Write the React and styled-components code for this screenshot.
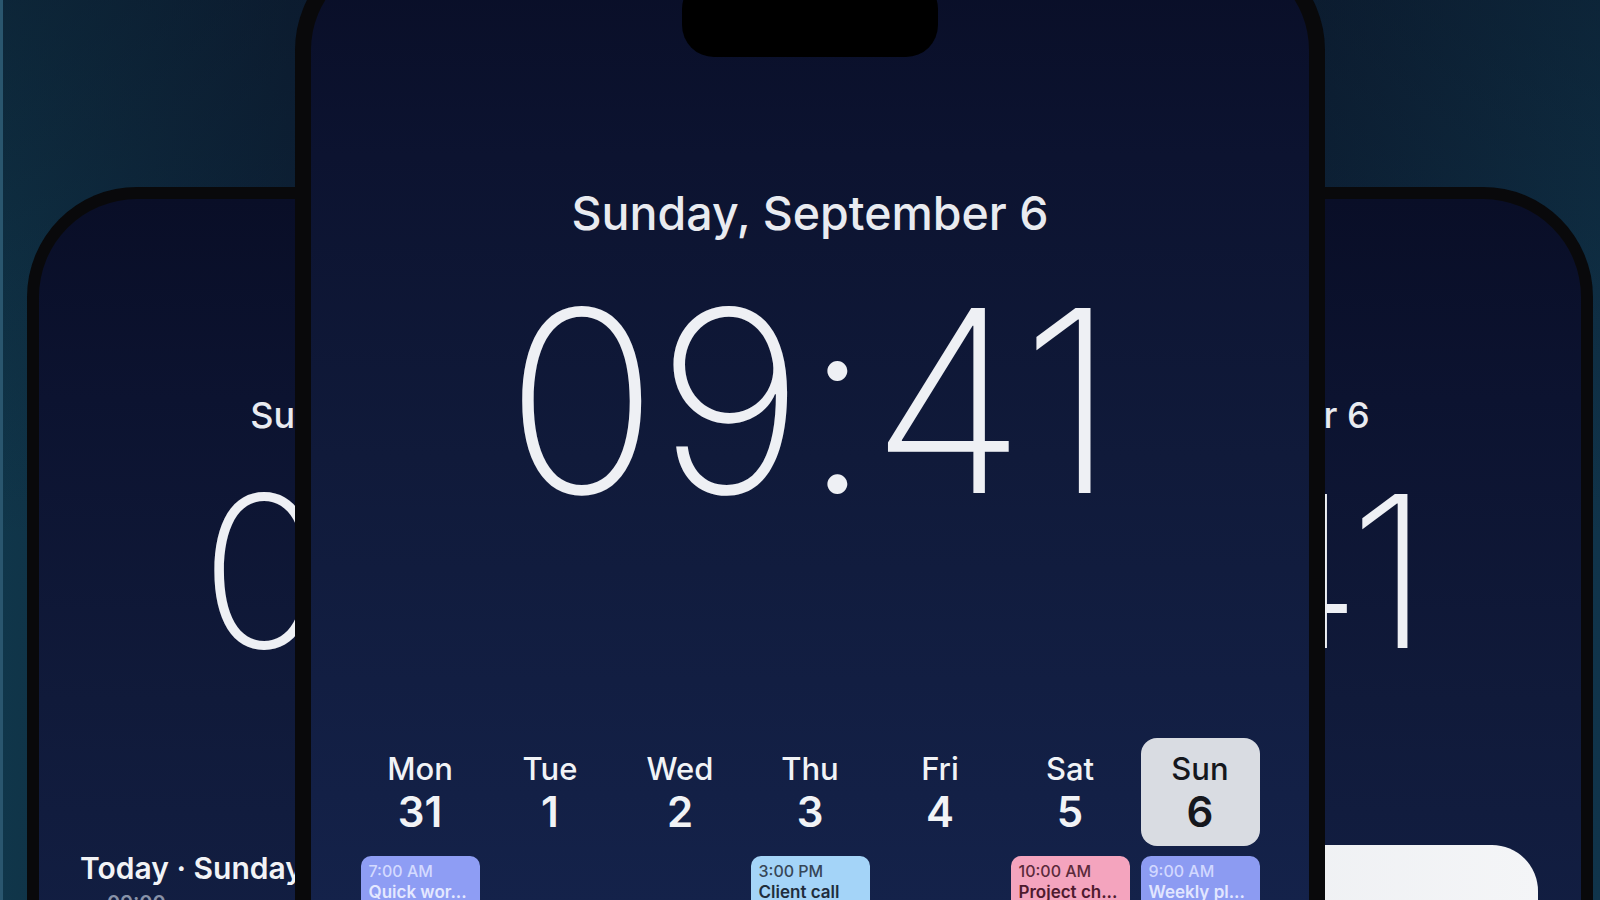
import React from 'react';
import styled, { createGlobalStyle } from 'styled-components';

const GlobalStyle = createGlobalStyle`
  html, body {
    margin: 0;
    padding: 0;
    background: #0c1a2e;
    overflow: hidden;
  }

  * {
    box-sizing: border-box;
  }
`;

const Stage = styled.div`
  position: relative;
  width: 1600px;
  height: 900px;
  overflow: hidden;
  font-family: 'Inter', 'Noto Sans', sans-serif;
  background:
    linear-gradient(180deg, rgba(8, 14, 30, 0.4) 0%, rgba(8, 14, 30, 0) 60%),
    linear-gradient(90deg, #10364a 0%, #0e253b 18%, #0c1c31 50%, #0e253b 82%, #10344a 100%);
  box-shadow: inset 3px 0 0 #2a566e;
`;

const Phone = styled.div`
  position: absolute;
  left: ${(p) => p.$left}px;
  top: ${(p) => p.$top}px;
  width: ${(p) => p.$width}px;
  height: ${(p) => p.$height}px;
  padding: ${(p) => p.$frame}px;
  border-radius: ${(p) => p.$radius}px;
  background: #09090b;
  z-index: ${(p) => p.$z};
`;

const Screen = styled.div`
  height: 100%;
  border-radius: ${(p) => p.$radius}px;
  overflow: hidden;
  display: flex;
  flex-direction: column;
  align-items: center;
  padding-top: ${(p) => p.$padTop}px;
  background: linear-gradient(180deg, #090e27 0px, #0c1330 200px, #101a3a 500px, #14224a 950px);
`;

const Island = styled.div`
  width: 256px;
  height: 80px;
  border-radius: 32px;
  background: #000;
  flex-shrink: 0;
`;

const DateLine = styled.div`
  margin-top: ${(p) => p.$gap}px;
  font-size: ${(p) => p.$size}px;
  font-weight: 500;
  line-height: 1.2;
  color: #e9ebf0;
  white-space: nowrap;
`;

const Clock = styled.div`
  margin-top: ${(p) => p.$gap}px;
  font-size: ${(p) => p.$size}px;
  font-weight: 200;
  line-height: 1;
  color: #eef0f4;
  letter-spacing: ${(p) => p.$track}em;
  white-space: nowrap;
`;

const WeekGrid = styled.div`
  margin-top: 210px;
  display: grid;
  grid-template-columns: repeat(7, 119px);
  column-gap: 11px;
`;

const DayColumn = styled.div`
  display: flex;
  flex-direction: column;
  gap: 10px;
`;

const DayHead = styled.div`
  display: flex;
  flex-direction: column;
  align-items: center;
  padding: 12px 0 9px;
  border-radius: 16px;
  background: ${(p) => (p.$active ? '#d9dce2' : 'transparent')};
  color: ${(p) => (p.$active ? '#15171d' : '#f1f3f6')};
`;

const DayName = styled.span`
  font-size: 31px;
  font-weight: 500;
  line-height: 1.2;
`;

const DayNum = styled.span`
  font-size: 42px;
  font-weight: 600;
  line-height: 1.2;
`;

const EventCard = styled.div`
  height: 64px;
  padding: 5px 8px;
  border-radius: 10px;
  background: ${(p) => p.$bg};
  visibility: ${(p) => (p.$empty ? 'hidden' : 'visible')};
`;

const EventTime = styled.div`
  font-size: 16px;
  font-weight: 500;
  line-height: 20px;
  color: ${(p) => p.$color};
`;

const EventTitle = styled.div`
  font-size: 17px;
  font-weight: 600;
  line-height: 22px;
  color: ${(p) => p.$color};
  white-space: nowrap;
`;

const AgendaBlock = styled.div`
  align-self: stretch;
  margin-top: 173px;
  padding-left: 41px;
`;

const AgendaTitle = styled.div`
  font-size: 30px;
  font-weight: 600;
  line-height: 1.2;
  color: #f2f3f6;
  white-space: nowrap;
`;

const AgendaSub = styled.div`
  margin-top: 4px;
  padding-left: 27px;
  font-size: 20px;
  font-weight: 600;
  line-height: 1.3;
  color: #8892a8;
`;

const WidgetCard = styled.div`
  align-self: stretch;
  margin: 168px 43px 0 55px;
  height: 220px;
  border-radius: 46px;
  background: linear-gradient(90deg, #d9dce2 0%, #eef0f3 60%, #f4f5f7 100%);
`;

const days = [
  { name: 'Mon', num: '31', event: { time: '7:00 AM', title: 'Quick wor...', bg: '#8e9df4', time_c: '#d4daff', title_c: '#e4e8ff' } },
  { name: 'Tue', num: '1' },
  { name: 'Wed', num: '2' },
  { name: 'Thu', num: '3', event: { time: '3:00 PM', title: 'Client call', bg: '#a4d4f8', time_c: '#364657', title_c: '#1f2d3c' } },
  { name: 'Fri', num: '4' },
  { name: 'Sat', num: '5', event: { time: '10:00 AM', title: 'Project ch...', bg: '#f4a4be', time_c: '#5b2a3b', title_c: '#4e1a2e' } },
  { name: 'Sun', num: '6', active: true, event: { time: '9:00 AM', title: 'Weekly pl...', bg: '#8c9bf2', time_c: '#d2d8ff', title_c: '#e2e6ff' } }
];

function BackPhone({ left, variant }) {
  return (
    <Phone $left={left} $top={187} $width={816} $height={900} $frame={12} $radius={110} $z={1}>
      <Screen $radius={98} $padTop={195}>
        <DateLine $gap={0} $size={36}>Sunday, September 6</DateLine>
        <Clock $gap={28} $size={212} $track={-0.045}>09:41</Clock>
        {variant === 'list' ? (
          <AgendaBlock>
            <AgendaTitle>Today · Sunday</AgendaTitle>
            <AgendaSub>09:00</AgendaSub>
          </AgendaBlock>
        ) : (
          <WidgetCard />
        )}
      </Screen>
    </Phone>
  );
}

export default function App() {
  return (
    <Stage>
      <GlobalStyle />
      <BackPhone left={27} variant="list" />
      <BackPhone left={777} variant="card" />
      <Phone $left={295} $top={-60} $width={1030} $height={1100} $frame={16} $radius={110} $z={2}>
        <Screen $radius={94} $padTop={21}>
          <Island />
          <DateLine $gap={129} $size={46.5}>Sunday, September 6</DateLine>
          <Clock $gap={32} $size={254} $track={-0.008}>09:41</Clock>
          <WeekGrid>
            {days.map((d) => (
              <DayColumn key={d.name}>
                <DayHead $active={d.active}>
                  <DayName>{d.name}</DayName>
                  <DayNum>{d.num}</DayNum>
                </DayHead>
                {d.event ? (
                  <EventCard $bg={d.event.bg}>
                    <EventTime $color={d.event.time_c}>{d.event.time}</EventTime>
                    <EventTitle $color={d.event.title_c}>{d.event.title}</EventTitle>
                  </EventCard>
                ) : (
                  <EventCard $empty />
                )}
              </DayColumn>
            ))}
          </WeekGrid>
        </Screen>
      </Phone>
    </Stage>
  );
}
